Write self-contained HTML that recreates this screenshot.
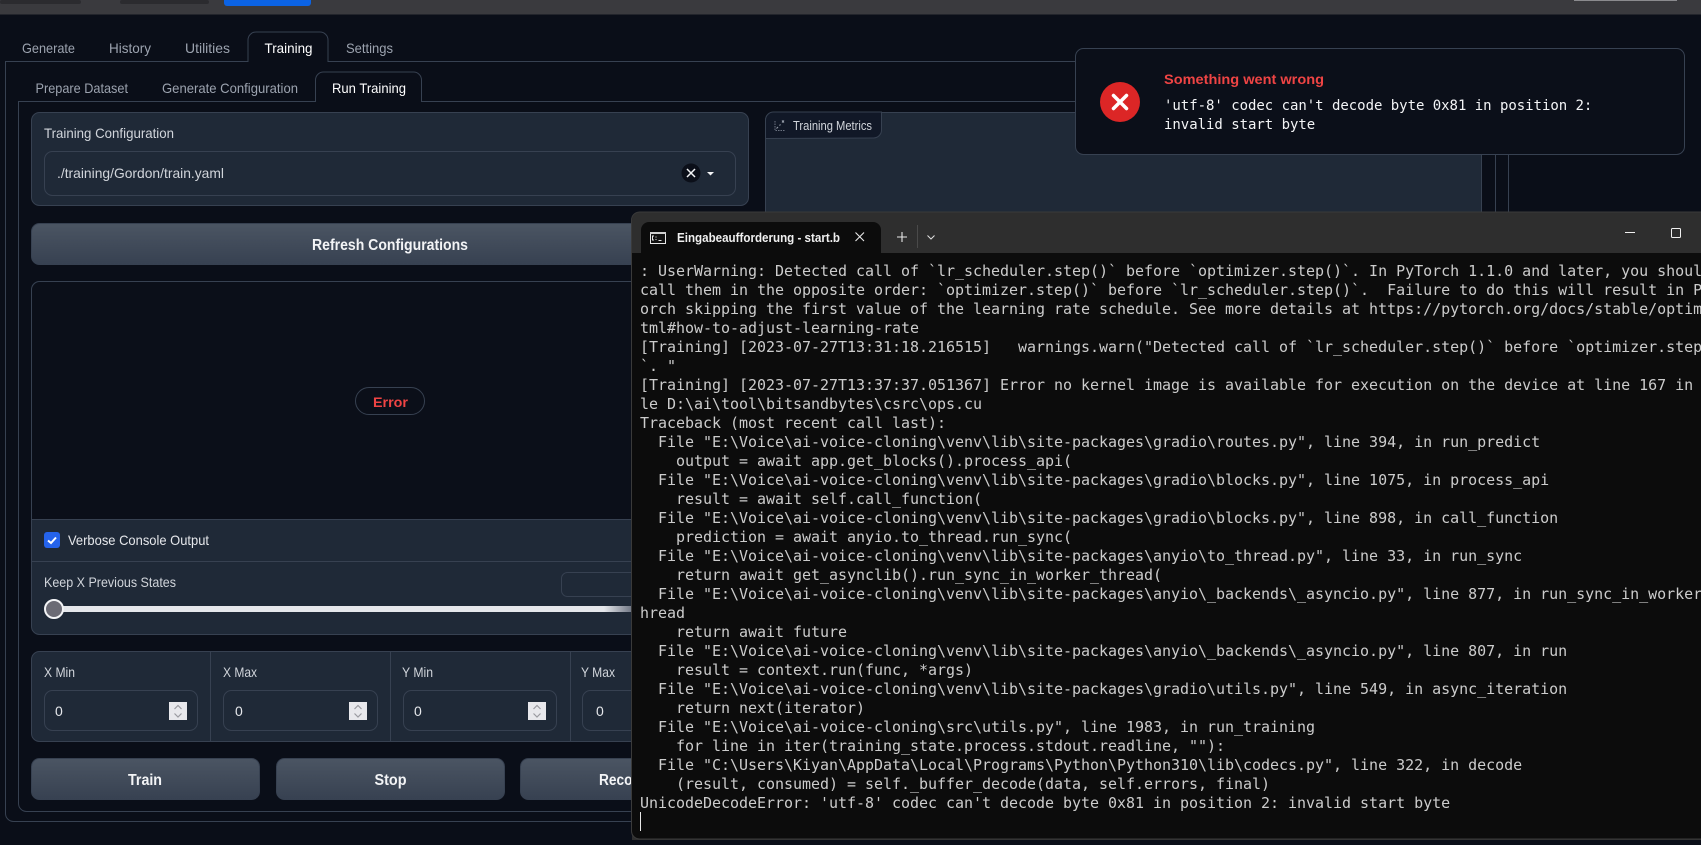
<!DOCTYPE html>
<html lang="en"><head><meta charset="utf-8"><title>Training</title>
<style>
html,body{margin:0;padding:0;background:#0b0f19;overflow:hidden}
svg{display:block;font-family:"Liberation Sans",sans-serif}
.s{font-size:14px;fill:#d1d5db}
.i{font-size:14px;fill:#9ca3af}
.a{font-size:14px;fill:#ffffff}
.b{font-size:16px;fill:#f3f4f6;font-weight:700}
.m{font-family:"DejaVu Sans Mono",monospace;font-size:14px;fill:#f3f4f6;letter-spacing:-.03px}
.t{font-family:"DejaVu Sans Mono",monospace;font-size:15px;fill:#cccccc;letter-spacing:-.03px;white-space:pre}
</style></head><body>
<svg width="1701" height="845" viewBox="0 0 1701 845" xmlns="http://www.w3.org/2000/svg">
<defs>
<linearGradient id="btn" x1="0" y1="0" x2="0" y2="1"><stop offset="0" stop-color="#4b5563"/><stop offset="1" stop-color="#374151"/></linearGradient>
<linearGradient id="trk" x1="0" y1="0" x2="1" y2="0"><stop offset="0" stop-color="#e5e7eb"/><stop offset=".95" stop-color="#e5e7eb"/><stop offset="1" stop-color="#6b7280"/></linearGradient>
<linearGradient id="plot" x1="0" y1="0" x2="0" y2="1"><stop offset="0" stop-color="#1f2937"/><stop offset=".7" stop-color="#1f2937"/><stop offset="1" stop-color="#1c2430"/></linearGradient>
</defs>
<rect width="1701" height="845" fill="#0a0e18"/>
<!-- top bar -->
<rect width="1701" height="14.5" fill="#3a3a3e"/>
<rect x="0" y="0" width="81" height="4" rx="2" fill="#2b2b2f"/>
<rect x="120" y="0" width="89" height="4" rx="2" fill="#2b2b2f"/>
<rect x="224" y="-4" width="87" height="10" rx="3" fill="#0b63e5"/>
<rect x="1574" y="0" width="103" height="1" fill="#8a8a8e"/>
<!-- containers: square top corners, rounded bottom corners -->
<path d="M5.500 61.500H1508.500V813.500a8 8 0 0 1-8 8H13.500a8 8 0 0 1-8-8z" fill="none" stroke="#374151"/>
<path d="M18.500 101.500H1495.500V803.500a8 8 0 0 1-8 8H26.500a8 8 0 0 1-8-8z" fill="none" stroke="#374151"/>
<path d="M248 62V40a8 8 0 0 1 8-8h64a8 8 0 0 1 8 8v22" fill="#0a0e18" stroke="#374151"/>
<rect x="249" y="60" width="78.500" height="3" fill="#0a0e18"/>
<path d="M315.500 102V80a8 8 0 0 1 8-8h90a8 8 0 0 1 8 8v22" fill="#0a0e18" stroke="#374151"/>
<rect x="316.500" y="100" width="104" height="3" fill="#0a0e18"/>
<!-- tabs -->
<text x="22" y="53" class="i" textLength="53" lengthAdjust="spacingAndGlyphs">Generate</text>
<text x="109" y="53" class="i" textLength="42" lengthAdjust="spacingAndGlyphs">History</text>
<text x="185" y="53" class="i" textLength="45" lengthAdjust="spacingAndGlyphs">Utilities</text>
<text x="264.500" y="53" class="a" textLength="48" lengthAdjust="spacingAndGlyphs">Training</text>
<text x="346" y="53" class="i" textLength="47" lengthAdjust="spacingAndGlyphs">Settings</text>
<text x="35.500" y="93" class="i" textLength="92.500" lengthAdjust="spacingAndGlyphs">Prepare Dataset</text>
<text x="162" y="93" class="i" textLength="136" lengthAdjust="spacingAndGlyphs">Generate Configuration</text>
<text x="332" y="93" class="a" textLength="74" lengthAdjust="spacingAndGlyphs">Run Training</text>
<!-- config panel -->
<rect x="31.500" y="112.500" width="717" height="93" rx="8" fill="#1f2937" stroke="#374151"/>
<text x="44" y="138" class="s" textLength="130" lengthAdjust="spacingAndGlyphs">Training Configuration</text>
<rect x="44.500" y="151.500" width="691" height="44" rx="8" fill="#1f2937" stroke="#374151"/>
<text x="57" y="178" class="s" fill="#e5e7eb" textLength="167" lengthAdjust="spacingAndGlyphs">./training/Gordon/train.yaml</text>
<circle cx="691" cy="173" r="9.500" fill="#0b0f19"/>
<path d="M687 169l8 8M695 169l-8 8" stroke="#f3f4f6" stroke-width="1.500" fill="none"/>
<path d="M707 172h7l-3.500 3.500z" fill="#f3f4f6"/>
<!-- metrics panel -->
<rect x="765.500" y="112.500" width="716" height="400" rx="8" fill="url(#plot)" stroke="#374151"/>
<path d="M765.500 138.500V120a8 8 0 0 1 8-8H881.500v18a8 8 0 0 1-8 8z" fill="#111827" stroke="#374151"/>
<path d="M775 121v9.500h9.500" fill="none" stroke="#6b7280" stroke-width="1" stroke-dasharray="1.500 1"/>
<path d="M776.500 128.500l1.500-1.500M779.500 125.500l1-1M782 122.500l2-2M782 120.500l2 2" fill="none" stroke="#9ca3af" stroke-width="1"/>
<text x="793" y="130" style="font-size:13px;fill:#d1d5db" textLength="79" lengthAdjust="spacingAndGlyphs">Training Metrics</text>
<!-- refresh -->
<rect x="31.500" y="223.500" width="717" height="41" rx="8" fill="url(#btn)" stroke="#374151"/>
<text x="312" y="250" class="b" textLength="156" lengthAdjust="spacingAndGlyphs">Refresh Configurations</text>
<!-- main block -->
<rect x="31.500" y="281.500" width="717" height="353" rx="8" fill="#1f2937" stroke="#374151"/>
<path d="M32 519V290a8 8 0 0 1 8-8H748V519z" fill="#0b0f19"/>
<rect x="355.500" y="387.500" width="69" height="27" rx="13.500" fill="none" stroke="#374151"/>
<text x="373" y="407" style="font-size:14px;font-weight:700;fill:#ef4444" textLength="35" lengthAdjust="spacingAndGlyphs">Error</text>
<path d="M32 519.500H748M32 561.500H748" stroke="#374151"/>
<rect x="44" y="532" width="16" height="16" rx="3" fill="#2563eb"/>
<path d="M48 540.500l3 2.500 5-5.500" fill="none" stroke="#fff" stroke-width="2"/>
<text x="68" y="545" class="s" style="fill:#e5e7eb" textLength="141" lengthAdjust="spacingAndGlyphs">Verbose Console Output</text>
<text x="44" y="587" class="s" textLength="132" lengthAdjust="spacingAndGlyphs">Keep X Previous States</text>
<rect x="561.500" y="572.500" width="120" height="24" rx="6" fill="#1f2937" stroke="#374151"/>
<rect x="54" y="606" width="579" height="6" fill="url(#trk)"/>
<circle cx="54" cy="609" r="9" fill="#6b6b75" stroke="#f3f4f6" stroke-width="2"/>
<!-- numbers -->
<rect x="31.500" y="651.500" width="717" height="90" rx="8" fill="#1f2937" stroke="#374151"/>
<path d="M210.500 652V741M390.500 652V741M570.500 652V741" stroke="#374151"/>
<text x="44" y="677" class="s" textLength="31" lengthAdjust="spacingAndGlyphs">X Min</text>
<text x="223" y="677" class="s" textLength="34" lengthAdjust="spacingAndGlyphs">X Max</text>
<text x="402" y="677" class="s" textLength="31" lengthAdjust="spacingAndGlyphs">Y Min</text>
<text x="581" y="677" class="s" textLength="34" lengthAdjust="spacingAndGlyphs">Y Max</text>
<rect x="44.500" y="690.500" width="153" height="40" rx="8" fill="none" stroke="#374151"/>
<rect x="223.500" y="690.500" width="154" height="40" rx="8" fill="none" stroke="#374151"/>
<rect x="403.500" y="690.500" width="153" height="40" rx="8" fill="none" stroke="#374151"/>
<rect x="582.500" y="690.500" width="153" height="40" rx="8" fill="none" stroke="#374151"/>
<text x="55" y="716" class="s" style="fill:#e5e7eb">0</text>
<text x="235" y="716" class="s" style="fill:#e5e7eb">0</text>
<text x="414" y="716" class="s" style="fill:#e5e7eb">0</text>
<text x="596" y="716" class="s" style="fill:#e5e7eb">0</text>
<g id="sp">
<rect x="169" y="702" width="18" height="18" fill="#e8e8ec"/>
<path d="M174.500 709l3.500-3.500 3.500 3.500M174.500 713.500l3.500 3.500 3.500-3.500" fill="none" stroke="#9a9aa0" stroke-width="1.200"/>
<rect x="349" y="702" width="18" height="18" fill="#e8e8ec"/>
<path d="M354.500 709l3.500-3.500 3.500 3.500M354.500 713.500l3.500 3.500 3.500-3.500" fill="none" stroke="#9a9aa0" stroke-width="1.200"/>
<rect x="528" y="702" width="18" height="18" fill="#e8e8ec"/>
<path d="M533.500 709l3.500-3.500 3.500 3.500M533.500 713.500l3.500 3.500 3.500-3.500" fill="none" stroke="#9a9aa0" stroke-width="1.200"/>
</g>
<!-- buttons -->
<rect x="31.500" y="758.500" width="228" height="41" rx="8" fill="url(#btn)" stroke="#374151"/>
<rect x="276.500" y="758.500" width="228" height="41" rx="8" fill="url(#btn)" stroke="#374151"/>
<rect x="520.500" y="758.500" width="228" height="41" rx="8" fill="url(#btn)" stroke="#374151"/>
<text x="128" y="785" class="b" textLength="34" lengthAdjust="spacingAndGlyphs">Train</text>
<text x="374.500" y="785" class="b" textLength="32" lengthAdjust="spacingAndGlyphs">Stop</text>
<text x="599" y="785" class="b" textLength="70" lengthAdjust="spacingAndGlyphs">Reconnect</text>
<!-- toast -->
<rect x="1075.500" y="48.500" width="609" height="106" rx="8" fill="#0b0f19" stroke="#374151"/>
<circle cx="1120" cy="102" r="20" fill="#dc2626"/>
<path d="M1113.500 95.500l13 13M1126.500 95.500l-13 13" stroke="#fff" stroke-width="3.500" stroke-linecap="round"/>
<text x="1164" y="84" style="font-size:14px;font-weight:700;fill:#ef4444" textLength="160" lengthAdjust="spacingAndGlyphs">Something went wrong</text>
<text x="1164" y="110" class="m">'utf-8' codec can't decode byte 0x81 in position 2:</text>
<text x="1164" y="129" class="m">invalid start byte</text>
<!-- terminal -->
<path d="M632 845V220a8 8 0 0 1 8-8H1710V845z" fill="#2e2e2e"/>
<path d="M632 253H1710V839H640a8 8 0 0 1-8-8z" fill="#0c0c0c"/>
<rect x="632" y="840" width="1078" height="6" fill="#0a0e18"/>
<path d="M631.500 253V220a8 8 0 0 1 8-8H1710M631.500 253V831a8 8 0 0 0 8 8H1710" fill="none" stroke="#3a3a3a"/>
<path d="M641 253V230a8 8 0 0 1 8-8H873a8 8 0 0 1 8 8v23z" fill="#0c0c0c"/>
<rect x="650.500" y="232.500" width="15" height="11" fill="#111" stroke="#e8e8e8"/>
<rect x="650" y="232" width="16" height="2" fill="#cfcfcf"/>
<path d="M654 236h-1.500v4H654M656 236.500v1M656 239v1M658.500 240.500h3" fill="none" stroke="#e8e8e8" stroke-width="1"/>
<text x="677" y="242" style="font-size:13px;font-weight:700;fill:#f0f0f0" textLength="163" lengthAdjust="spacingAndGlyphs">Eingabeaufforderung - start.b</text>
<path d="M855.500 232.500l8.500 8.500M864 232.500l-8.500 8.500" stroke="#e8e8e8" stroke-width="1.100" fill="none"/>
<path d="M897 237h10M902 232v10" stroke="#e8e8e8" stroke-width="1.100" fill="none"/>
<path d="M917.500 225v23" stroke="#4a4a4a"/>
<path d="M927.500 235.500l3.500 3.500 3.500-3.500" stroke="#e0e0e0" stroke-width="1" fill="none"/>
<path d="M1625 232.500h10" stroke="#f0f0f0" stroke-width="1"/>
<rect x="1671.500" y="228.500" width="9" height="9" rx="1" fill="none" stroke="#f0f0f0"/>
<g class="tg">
<text class="t" x="640" y="276">: UserWarning: Detected call of `lr_scheduler.step()` before `optimizer.step()`. In PyTorch 1.1.0 and later, you shoul</text>
<text class="t" x="640" y="295">call them in the opposite order: `optimizer.step()` before `lr_scheduler.step()`.  Failure to do this will result in P</text>
<text class="t" x="640" y="314">orch skipping the first value of the learning rate schedule. See more details at https://pytorch.org/docs/stable/optim</text>
<text class="t" x="640" y="333">tml#how-to-adjust-learning-rate</text>
<text class="t" x="640" y="352">[Training] [2023-07-27T13:31:18.216515]   warnings.warn("Detected call of `lr_scheduler.step()` before `optimizer.step</text>
<text class="t" x="640" y="371">`. "</text>
<text class="t" x="640" y="390">[Training] [2023-07-27T13:37:37.051367] Error no kernel image is available for execution on the device at line 167 in</text>
<text class="t" x="640" y="409">le D:\ai\tool\bitsandbytes\csrc\ops.cu</text>
<text class="t" x="640" y="428">Traceback (most recent call last):</text>
<text class="t" x="640" y="447">  File "E:\Voice\ai-voice-cloning\venv\lib\site-packages\gradio\routes.py", line 394, in run_predict</text>
<text class="t" x="640" y="466">    output = await app.get_blocks().process_api(</text>
<text class="t" x="640" y="485">  File "E:\Voice\ai-voice-cloning\venv\lib\site-packages\gradio\blocks.py", line 1075, in process_api</text>
<text class="t" x="640" y="504">    result = await self.call_function(</text>
<text class="t" x="640" y="523">  File "E:\Voice\ai-voice-cloning\venv\lib\site-packages\gradio\blocks.py", line 898, in call_function</text>
<text class="t" x="640" y="542">    prediction = await anyio.to_thread.run_sync(</text>
<text class="t" x="640" y="561">  File "E:\Voice\ai-voice-cloning\venv\lib\site-packages\anyio\to_thread.py", line 33, in run_sync</text>
<text class="t" x="640" y="580">    return await get_asynclib().run_sync_in_worker_thread(</text>
<text class="t" x="640" y="599">  File "E:\Voice\ai-voice-cloning\venv\lib\site-packages\anyio\_backends\_asyncio.py", line 877, in run_sync_in_worker</text>
<text class="t" x="640" y="618">hread</text>
<text class="t" x="640" y="637">    return await future</text>
<text class="t" x="640" y="656">  File "E:\Voice\ai-voice-cloning\venv\lib\site-packages\anyio\_backends\_asyncio.py", line 807, in run</text>
<text class="t" x="640" y="675">    result = context.run(func, *args)</text>
<text class="t" x="640" y="694">  File "E:\Voice\ai-voice-cloning\venv\lib\site-packages\gradio\utils.py", line 549, in async_iteration</text>
<text class="t" x="640" y="713">    return next(iterator)</text>
<text class="t" x="640" y="732">  File "E:\Voice\ai-voice-cloning\src\utils.py", line 1983, in run_training</text>
<text class="t" x="640" y="751">    for line in iter(training_state.process.stdout.readline, ""):</text>
<text class="t" x="640" y="770">  File "C:\Users\Kiyan\AppData\Local\Programs\Python\Python310\lib\codecs.py", line 322, in decode</text>
<text class="t" x="640" y="789">    (result, consumed) = self._buffer_decode(data, self.errors, final)</text>
<text class="t" x="640" y="808">UnicodeDecodeError: 'utf-8' codec can't decode byte 0x81 in position 2: invalid start byte</text>
</g>
<rect x="640" y="812" width="1" height="19" fill="#e8e8e8"/>
</svg>
</body></html>
